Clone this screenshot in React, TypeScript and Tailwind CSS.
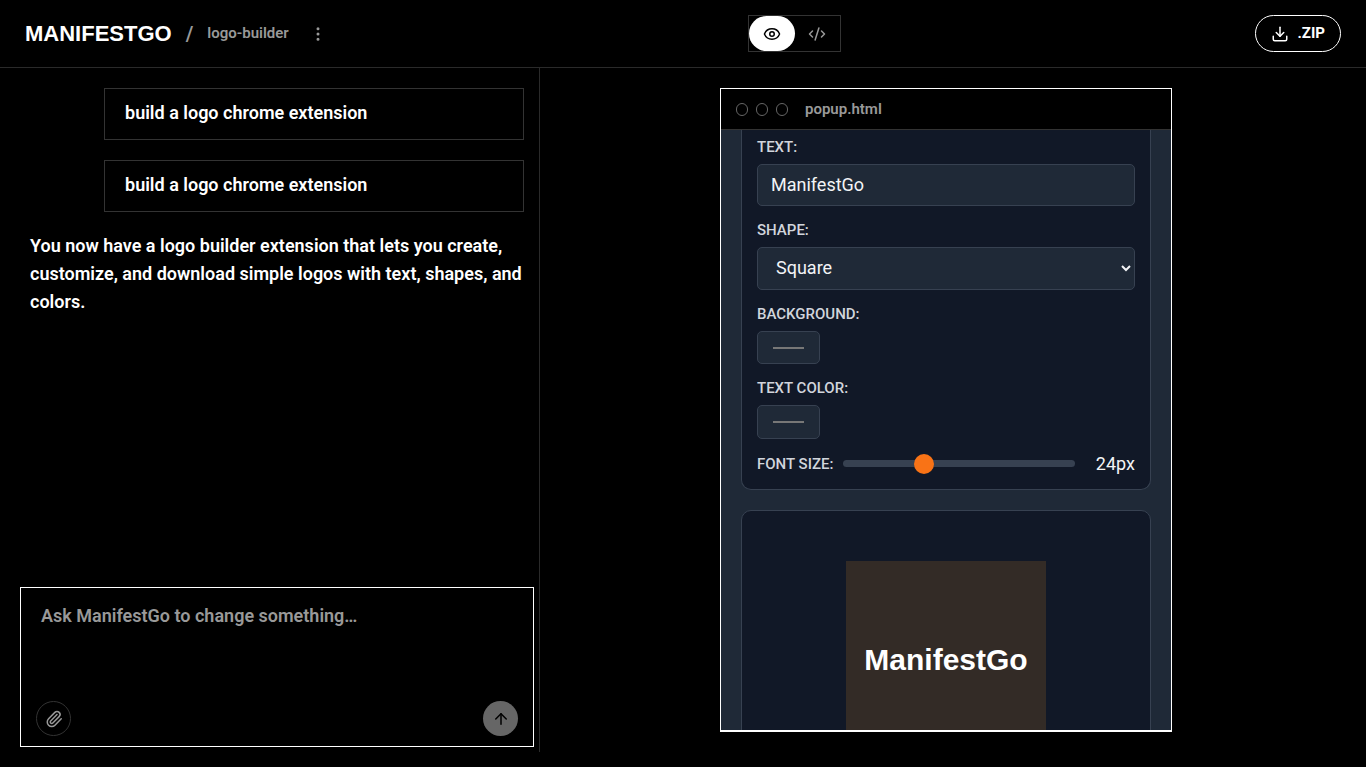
import { useState } from "react";
import { ArrowUp, CodeXml, Download, EllipsisVertical, Eye, Paperclip } from "lucide-react";

const prompts = ["build a logo chrome extension", "build a logo chrome extension"];

const Header = () => {
  return (
    <header className="flex items-center justify-between h-17 px-[25px] border-b border-[#2a2a2a]">
      <div className="flex items-center gap-[14px]">
        <a href="#" className="font-['Liberation_Sans',sans-serif] text-[22px] font-bold">
          MANIFESTGO
        </a>
        <span className="text-xl text-[#999]">/</span>
        <span className="text-[15px] text-[#999]">logo-builder</span>
        <button aria-label="Project menu" className="flex items-center justify-center size-[30px] text-[#999]">
          <EllipsisVertical size={18} />
        </button>
      </div>
      <div className="flex h-[37px] border border-[#333]">
        <button aria-label="Preview" className="flex items-center justify-center w-[46px] rounded-full bg-white text-black">
          <Eye size={18} />
        </button>
        <button aria-label="Code" className="flex items-center justify-center w-[45px] text-[#999]">
          <CodeXml size={18} />
        </button>
      </div>
      <button className="flex items-center gap-2 h-[37px] px-[15px] border border-white rounded-full text-[15px] font-bold">
        <Download size={18} />
        .ZIP
      </button>
    </header>
  );
};

const Chat = () => {
  return (
    <section className="flex flex-col w-[540px] shrink-0 border-r border-[#2a2a2a] pb-[5px]">
      <div className="flex flex-col flex-1 min-h-0 gap-5 pt-5 pl-[30px] pr-[15px] text-lg">
        {prompts.map((prompt, i) => (
          <div key={i} className="self-end w-[420px] border border-[#333] px-5 pt-[10px] pb-3 leading-7">
            {prompt}
          </div>
        ))}
        <p className="leading-7">
          You now have a logo builder extension that lets you create, customize, and download simple logos with text,
          shapes, and colors.
        </p>
      </div>
      <form className="flex flex-col h-40 ml-5 mr-[5px] border border-white px-[15px] pt-[14px] pb-[10px]">
        <textarea
          aria-label="Message"
          placeholder="Ask ManifestGo to change something…"
          className="flex-1 resize-none px-[5px] text-lg outline-none placeholder:text-[#999]"
        />
        <div className="flex items-center justify-between">
          <button
            type="button"
            aria-label="Attach file"
            className="flex items-center justify-center size-[35px] rounded-full border border-[#333] text-[#999]"
          >
            <Paperclip size={18} />
          </button>
          <button
            type="button"
            aria-label="Send"
            className="flex items-center justify-center size-[35px] rounded-full bg-[#666] text-black"
          >
            <ArrowUp size={18} />
          </button>
        </div>
      </form>
    </section>
  );
};

const LogoForm = () => {
  const [text, setText] = useState("ManifestGo");
  const [fontSize, setFontSize] = useState(24);

  return (
    <div className="flex flex-col h-full gap-5 px-5 bg-[#1f2937] font-normal text-lg text-gray-100">
      <div className="flex flex-col shrink-0 gap-[14px] rounded-b-[10px] border border-t-0 border-[#374151] bg-[#111827] px-[15px] pt-[7px] pb-[15px]">
        <div className="flex flex-col gap-[7px]">
          <label htmlFor="text" className="text-[15px] leading-5 font-medium text-gray-300">
            TEXT:
          </label>
          <input
            id="text"
            value={text}
            onChange={(e) => setText(e.target.value)}
            className="h-[42px] rounded-[5px] border border-[#374151] bg-[#1f2937] px-[13px] pb-[2px]"
          />
        </div>
        <div className="flex flex-col gap-[7px]">
          <label htmlFor="shape" className="text-[15px] leading-5 font-medium text-gray-300">
            SHAPE:
          </label>
          <select id="shape" className="h-[43px] rounded-[5px] border border-[#374151] bg-[#1f2937] px-[14px] pb-[2px]">
            <option>Square</option>
            <option>Circle</option>
          </select>
        </div>
        <div className="flex flex-col items-start gap-[7px]">
          <label htmlFor="background" className="text-[15px] leading-5 font-medium text-gray-300">
            BACKGROUND:
          </label>
          <input
            id="background"
            type="color"
            defaultValue="#332b26"
            className="w-[63px] h-[33px] rounded-[5px] border border-[#374151] bg-[#1f2937] px-[13px] py-[11px]"
          />
        </div>
        <div className="flex flex-col items-start gap-[7px]">
          <label htmlFor="color" className="text-[15px] leading-5 font-medium text-gray-300">
            TEXT COLOR:
          </label>
          <input
            id="color"
            type="color"
            defaultValue="#ffffff"
            className="w-[63px] h-[34px] rounded-[5px] border border-[#374151] bg-[#1f2937] px-[13px] py-[11px]"
          />
        </div>
        <div className="flex items-center gap-[10px] h-[21px]">
          <label htmlFor="size" className="text-[15px] leading-5 font-medium text-gray-300">
            FONT SIZE:
          </label>
          <input
            id="size"
            type="range"
            min={12}
            max={48}
            value={fontSize}
            onChange={(e) => setFontSize(Number(e.target.value))}
            className="flex-1 min-w-0 h-[7px] appearance-none rounded-full bg-[#374151] [&::-webkit-slider-thumb]:appearance-none [&::-webkit-slider-thumb]:size-5 [&::-webkit-slider-thumb]:rounded-full [&::-webkit-slider-thumb]:bg-[#f97316]"
          />
          <span className="w-[50px] text-right">{fontSize}px</span>
        </div>
      </div>
      <div className="flex justify-center shrink-0 rounded-[10px] border border-[#374151] bg-[#111827] py-[50px]">
        <div className="flex items-center justify-center size-[200px] bg-[#332b26] pb-[2px] font-['Liberation_Sans',sans-serif] text-3xl font-bold text-white">
          {text}
        </div>
      </div>
    </div>
  );
};

const Preview = () => {
  return (
    <section className="flex flex-1 justify-center py-5 pr-[14px]">
      <div className="flex flex-col w-[452px] border border-b-2 border-white">
        <div className="flex items-center gap-[17px] h-[41px] shrink-0 px-[15px] border-b border-[#333] text-[15px] text-[#999]">
          <div className="flex gap-2">
            <span className="w-3 h-[13px] rounded-full border border-[#666]"></span>
            <span className="w-3 h-[13px] rounded-full border border-[#666]"></span>
            <span className="w-3 h-[13px] rounded-full border border-[#666]"></span>
          </div>
          popup.html
        </div>
        <div className="flex-1 min-h-0 overflow-hidden">
          <LogoForm />
        </div>
      </div>
    </section>
  );
};

export default function App() {
  return (
    <div className="flex flex-col h-screen pb-[15px] bg-black text-white font-semibold font-[Roboto,sans-serif]">
      <Header />
      <main className="flex flex-1 min-h-0">
        <Chat />
        <Preview />
      </main>
    </div>
  );
}
